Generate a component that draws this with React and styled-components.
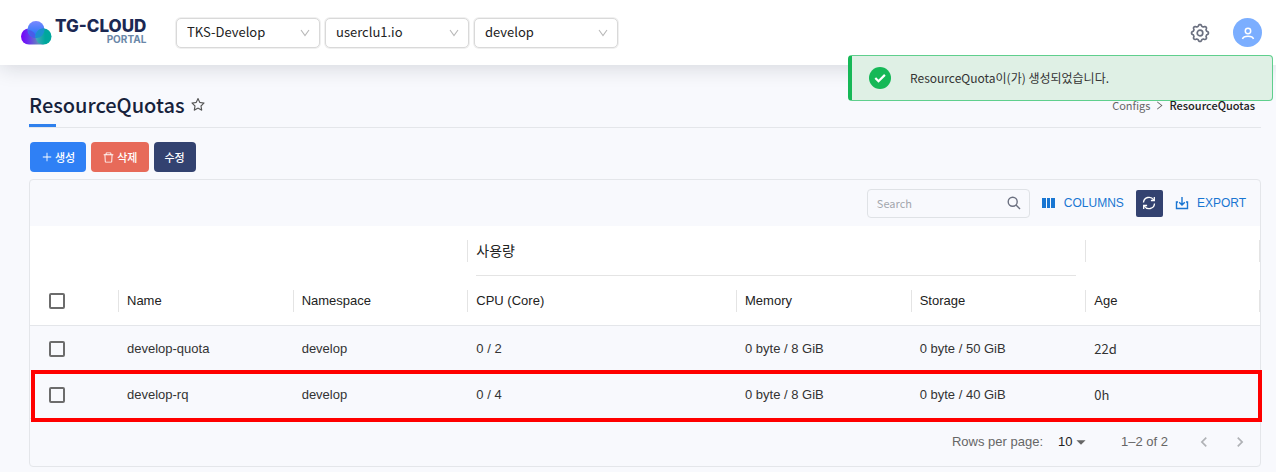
import React from 'react';
import styled, { createGlobalStyle } from 'styled-components';
import { AiOutlinePlus, AiOutlineDelete, AiOutlineStar, AiOutlineRight } from 'react-icons/ai';
import { MdChevronLeft, MdChevronRight, MdArrowDropDown } from 'react-icons/md';

const kr = '"Noto Sans CJK KR", sans-serif';
const sans = '"Liberation Sans", "Noto Sans CJK KR", sans-serif';
const line = '#e4e6ea';
const page = '#f8f9fd';
const navy = '#334270';

const GlobalStyle = createGlobalStyle`
  * { box-sizing: border-box; }
  body { margin: 0; background: ${page}; font-family: ${kr}; color: #222; }
  button, select, input { font: inherit; color: inherit; margin: 0; }
  button { cursor: pointer; }
  svg { display: block; flex: none; }
`;

const Header = styled.header`
  position: relative;
  display: flex;
  align-items: center;
  height: 65px;
  padding: 0 14px 0 20px;
  background: #fff;
  box-shadow: 0 2px 20px rgba(20, 24, 40, 0.16);
`;
const Brand = styled.a`
  display: flex;
  align-items: center;
  gap: 3px;
  width: 126px;
  margin-right: 30px;
  color: #1b2853;
  text-decoration: none;
`;
const BrandText = styled.span`
  display: flex;
  flex-direction: column;
  align-items: flex-end;
  padding-bottom: 2px;
  font-family: Inter, sans-serif;
  font-weight: 800;
  font-size: 17px;
  line-height: 15px;
  white-space: nowrap;
`;
const BrandSub = styled.small`
  font-weight: 700;
  font-size: 10px;
  line-height: 10px;
  color: #6a87a8;
`;
const Scopes = styled.nav`
  display: flex;
  gap: 5px;
  flex: 1;
`;
const SelectBox = styled.label`
  display: grid;
  align-items: center;
  width: 144px;
  height: 30px;
  color: #b8b8b8;
  > * { grid-area: 1 / 1; }
  > svg { justify-self: end; margin-right: 10px; pointer-events: none; }
`;
const Select = styled.select`
  appearance: none;
  width: 100%;
  height: 30px;
  padding: 0 28px 1px 10px;
  border: 1px solid #d9d9d9;
  border-radius: 5px;
  background: #fff;
  box-shadow: 0 0 0 1px #f0f0f0;
  font-size: 13px;
  line-height: 20px;
  color: #222;
`;
const IconButton = styled.button`
  display: grid;
  place-items: center;
  width: ${p => p.$size || 28}px;
  height: ${p => p.$size || 28}px;
  padding: 0;
  border: 0;
  border-radius: ${p => p.$radius || '50%'};
  background: ${p => p.$bg || 'transparent'};
  color: ${p => p.$color || '#6b7080'};
`;
const Account = styled.div`
  display: flex;
  align-items: center;
  gap: 19px;
`;
const Toast = styled.div`
  position: absolute;
  top: 55px;
  right: 3px;
  display: flex;
  align-items: center;
  gap: 19px;
  width: 425px;
  height: 46px;
  padding: 0 17px;
  border: 1px solid #5fcf8d;
  border-left: 4px solid #16b857;
  border-radius: 4px;
  background: #dff0e5;
  font-size: 12px;
  line-height: 20px;
  color: #333;
`;
const Main = styled.main`
  padding: 25px 15px 5px 29px;
`;
const TitleBar = styled.div`
  display: flex;
  justify-content: space-between;
  align-items: flex-start;
  height: 38px;
  padding-right: 6px;
  border-bottom: 1px solid ${line};
`;
const Title = styled.h1`
  display: flex;
  align-items: center;
  gap: 6px;
  height: 37px;
  margin: 0;
  padding-bottom: 7px;
  font-weight: 500;
  font-size: 20px;
  line-height: 30px;
  color: #17223b;
  background: linear-gradient(#2f80ed, #2f80ed) left bottom / 27px 3px no-repeat;
`;
const Crumbs = styled.nav`
  display: flex;
  align-items: center;
  gap: 4px;
  padding-top: 5px;
  font-size: 11px;
  line-height: 20px;
  color: #666;
  a { color: inherit; text-decoration: none; }
  strong { font-weight: 500; color: #222; }
`;
const Actions = styled.div`
  display: flex;
  gap: 5px;
  padding: 14px 0 7px 1px;
`;
const ActionButton = styled.button`
  display: flex;
  align-items: center;
  justify-content: center;
  gap: 2px;
  height: 30px;
  padding: 0 11px;
  border: 0;
  border-radius: 4px;
  background: ${p => p.$bg};
  color: #fff;
  font-size: 11px;
  line-height: 16px;
  font-weight: 500;
`;
const Panel = styled.section`
  border: 1px solid ${line};
  border-radius: 4px;
  font-family: ${sans};
  font-size: 13px;
  line-height: 20px;
`;
const Toolbar = styled.div`
  display: flex;
  align-items: center;
  justify-content: flex-end;
  height: 46px;
  padding-right: 14px;
`;
const SearchBox = styled.label`
  display: flex;
  align-items: center;
  width: 163px;
  height: 29px;
  margin-right: 12px;
  padding: 0 8px 0 9px;
  border: 1px solid #dfe2e6;
  border-radius: 4px;
  color: #6b7080;
`;
const SearchInput = styled.input`
  flex: 1;
  min-width: 0;
  padding: 0;
  border: 0;
  outline: 0;
  background: none;
  font-family: ${kr};
  font-size: 11px;
  &::placeholder { color: #a3a7ad; }
`;
const TextButton = styled.button`
  display: flex;
  align-items: center;
  gap: 8px;
  padding: 0;
  border: 0;
  background: none;
  font-size: 12px;
  color: #1976d2;
`;
const Refresh = styled(IconButton)`
  margin: 0 12px;
`;
const Grid = styled.table`
  width: 100%;
  table-layout: fixed;
  border-collapse: separate;
  border-spacing: 0;
  border-bottom: 1px solid ${line};
`;
const Col = styled.col`
  width: ${p => p.$w};
`;
const Th = styled.th`
  height: 50px;
  padding: 0 9px;
  background:
    ${p => p.$divider ? 'linear-gradient(#e4e4e4, #e4e4e4) left center / 1px 22px no-repeat,' : ''}
    ${p => p.$last ? 'linear-gradient(#e4e4e4, #e4e4e4) right center / 1px 22px no-repeat,' : ''}
    ${p => p.$group ? 'linear-gradient(#e4e4e4, #e4e4e4) 9px bottom / calc(100% - 18px) 1px no-repeat,' : ''}
    #fff;
  border-bottom: ${p => p.$base ? `1px solid ${line}` : '0'};
  text-align: left;
  font-weight: 400;
  font-size: ${p => p.$group ? 14 : 13}px;
  color: #222;
`;
const Td = styled.td`
  padding: 0 9px;
  font-family: ${p => p.$kr ? kr : 'inherit'};
  color: #333;
`;
const Row = styled.tr`
  position: relative;
  height: 46px;
  ${p => p.$marked && `
    > td:first-child::after {
      content: '';
      position: absolute;
      inset: -2px -2px -4px 1px;
      border: 4px solid #f00;
      pointer-events: none;
    }
  `}
`;
const Check = styled.input.attrs({ type: 'checkbox' })`
  appearance: none;
  display: block;
  width: 16px;
  height: 16px;
  margin: 0 0 0 10px;
  border: 2px solid #6c6c6c;
  border-radius: 2px;
`;
const Pager = styled.footer`
  display: flex;
  align-items: center;
  justify-content: flex-end;
  height: 47px;
  padding: 0 6px 2px 0;
  color: #666;
`;
const PageSize = styled.label`
  display: flex;
  align-items: center;
  gap: 15px;
  margin-right: 29px;
`;
const PageSizeBox = styled.span`
  display: grid;
  align-items: center;
  width: 34px;
  > * { grid-area: 1 / 1; }
  > svg { justify-self: end; pointer-events: none; }
`;
const PageSelect = styled.select`
  appearance: none;
  width: 100%;
  padding: 0;
  border: 0;
  background: none;
  color: #222;
`;
const PageButtons = styled.div`
  display: flex;
  gap: 8px;
  margin-left: 22px;
`;

const Logo = () => (
  <svg width="32" height="26" viewBox="0 -1 32 26" aria-hidden="true">
    <defs>
      <linearGradient id="left"><stop offset="0" stopColor="#7600f8" /><stop offset="0.3" stopColor="#6b2df0" /><stop offset="0.75" stopColor="#6486bd" /></linearGradient>
      <linearGradient id="top" x1="0" y1="0" x2="0" y2="1"><stop offset="0" stopColor="#7a88ff" /><stop offset="1" stopColor="#1474f5" /></linearGradient>
      <linearGradient id="right"><stop offset="0" stopColor="#4aa6bf" /><stop offset="0.6" stopColor="#00a79d" /></linearGradient>
    </defs>
    <path d="M9 7.500a8 8 0 0 0 0 16h14.500V15L9 7.500z" fill="url(#left)" />
    <circle cx="16" cy="8.500" r="8.500" fill="url(#top)" />
    <path d="M8 9a8 8 0 0 1 8 8 8.500 8.500 0 0 1-8-8z" fill="#4a5ce8" />
    <circle cx="23.500" cy="15.500" r="8" fill="url(#right)" />
    <path d="M24.500 7.600a8 8 0 0 0-9 9.400 8.500 8.500 0 0 0 9-9.400z" fill="#1d8fd0" />
  </svg>
);

const gearPath = Array.from({ length: 96 }, (_, i) => {
  const a = (i / 96) * Math.PI * 2;
  const r = 7.6 + Math.max(-0.8, Math.min(0.8, 1.2 * Math.cos(8 * a)));
  return `${i ? 'L' : 'M'}${(10 + r * Math.cos(a)).toFixed(2)} ${(10 + r * Math.sin(a)).toFixed(2)}`;
}).join('') + 'z';

const Gear = () => (
  <svg width="20" height="20" viewBox="0 0 20 20" fill="none" stroke="currentColor" strokeWidth="1.7" strokeLinejoin="round" aria-hidden="true">
    <path d={gearPath} />
    <circle cx="10" cy="10" r="2.8" />
  </svg>
);
const Person = () => (
  <svg width="14" height="14" viewBox="0 0 14 14" fill="none" stroke="currentColor" strokeWidth="1.500" aria-hidden="true">
    <circle cx="7" cy="5" r="2.700" />
    <path d="M1.500 13c.600-2 2.600-2.800 5.500-2.800s4.900.800 5.500 2.800" />
  </svg>
);
const Success = () => (
  <svg width="22" height="22" viewBox="0 0 22 22" aria-hidden="true">
    <circle cx="11" cy="11" r="11" fill="#16b857" />
    <path d="M6.300 11 9.500 14.200 15.900 7.900" fill="none" stroke="#fff" strokeWidth="2.200" />
  </svg>
);
const Sync = () => (
  <svg width="14" height="14" viewBox="0 0 14 14" fill="none" stroke="currentColor" strokeWidth="1.300" aria-hidden="true">
    <path d="M1.500 6.500A5.500 5.500 0 0 1 11.700 4M12.500 7.500A5.500 5.500 0 0 1 2.300 10" />
    <path d="M12.300 1v3.500H8.900M1.700 13V9.500h3.400" />
  </svg>
);
const Download = () => (
  <svg width="14" height="14" viewBox="0 0 14 14" fill="none" stroke="currentColor" strokeWidth="1.400" aria-hidden="true">
    <path d="M3 6H1.500v6.500h11V6H11M7 1v8M4.200 6.300 7 9.100l2.800-2.800" />
  </svg>
);
const Bars = () => (
  <svg width="14" height="10" viewBox="0 0 14 10" fill="currentColor" aria-hidden="true">
    <path d="M0 0h4v10H0zM5 0h3v10H5zM9 0h4v10H9z" />
  </svg>
);
const Magnifier = () => (
  <svg width="14" height="14" viewBox="0 0 14 14" fill="none" stroke="currentColor" strokeWidth="1.400" aria-hidden="true">
    <circle cx="5.700" cy="5.700" r="4.500" />
    <path d="m9 9 4 4" />
  </svg>
);
const Caret = () => (
  <svg width="10" height="8" viewBox="0 0 10 8" fill="none" stroke="currentColor" strokeWidth="1.100" aria-hidden="true">
    <path d="M1 1l4 5.500L9 1" />
  </svg>
);

const scopes = [['Cluster group', 'TKS-Develop'], ['Cluster', 'userclu1.io'], ['Namespace', 'develop']];
const rows = [
  { name: 'develop-quota', ns: 'develop', cpu: '0 / 2', memory: '0 byte / 8 GiB', storage: '0 byte / 50 GiB', age: '22d' },
  { name: 'develop-rq', ns: 'develop', cpu: '0 / 4', memory: '0 byte / 8 GiB', storage: '0 byte / 40 GiB', age: '0h', marked: true },
];
const columns = ['Name', 'Namespace', 'CPU (Core)', 'Memory', 'Storage', 'Age'];
const widths = ['88px', '14.2%', '14.2%', 'auto', '14.2%', '14.2%', '14.2%'];

export default function App() {
  return (
    <>
      <GlobalStyle />
      <Header>
        <Brand href="#home">
          <Logo />
          <BrandText>TG-CLOUD<BrandSub>PORTAL</BrandSub></BrandText>
        </Brand>
        <Scopes>
          {scopes.map(([label, value]) => (
            <SelectBox key={label}>
              <Select aria-label={label}><option>{value}</option></Select>
              <Caret />
            </SelectBox>
          ))}
        </Scopes>
        <Account>
          <IconButton aria-label="Settings"><Gear /></IconButton>
          <IconButton $size={29} $bg="#7baeff" $color="#fff" aria-label="Account"><Person /></IconButton>
        </Account>
      </Header>
      <Toast role="status"><Success />ResourceQuota이(가) 생성되었습니다.</Toast>
      <Main>
        <TitleBar>
          <Title>ResourceQuotas<AiOutlineStar size={16} color="#555" /></Title>
          <Crumbs aria-label="Breadcrumb">
            <a href="#configs">Configs</a><AiOutlineRight size={11} /><strong>ResourceQuotas</strong>
          </Crumbs>
        </TitleBar>
        <Actions>
          <ActionButton $bg="#2f80f5"><AiOutlinePlus size={12} />생성</ActionButton>
          <ActionButton $bg="#e76a59"><AiOutlineDelete size={13} />삭제</ActionButton>
          <ActionButton $bg={navy}>수정</ActionButton>
        </Actions>
        <Panel>
          <Toolbar>
            <SearchBox>
              <SearchInput placeholder="Search" aria-label="Search" />
              <Magnifier />
            </SearchBox>
            <TextButton><Bars />COLUMNS</TextButton>
            <Refresh $size={27} $radius="2px" $bg={navy} $color="#fff" aria-label="Refresh"><Sync /></Refresh>
            <TextButton><Download />EXPORT</TextButton>
          </Toolbar>
          <Grid>
            <colgroup>{widths.map((w, i) => <Col key={i} $w={w} />)}</colgroup>
            <thead>
              <tr>
                <Th colSpan={3} />
                <Th colSpan={3} $divider $group scope="colgroup">사용량</Th>
                <Th $divider $last />
              </tr>
              <tr>
                <Th $base><Check aria-label="Select all rows" /></Th>
                {columns.map(c => <Th key={c} $base $divider $last={c === 'Age'} scope="col">{c}</Th>)}
              </tr>
            </thead>
            <tbody>
              {rows.map(r => (
                <Row key={r.name} $marked={r.marked}>
                  <Td><Check aria-label={`Select ${r.name}`} /></Td>
                  <Td>{r.name}</Td>
                  <Td>{r.ns}</Td>
                  <Td>{r.cpu}</Td>
                  <Td>{r.memory}</Td>
                  <Td>{r.storage}</Td>
                  <Td $kr>{r.age}</Td>
                </Row>
              ))}
            </tbody>
          </Grid>
          <Pager>
            <PageSize>
              Rows per page:
              <PageSizeBox>
                <PageSelect><option>10</option></PageSelect>
                <MdArrowDropDown size={22} />
              </PageSizeBox>
            </PageSize>
            1–2 of 2
            <PageButtons>
              <IconButton aria-label="Previous page" $color="#b0b2b6"><MdChevronLeft size={20} /></IconButton>
              <IconButton aria-label="Next page" $color="#b0b2b6"><MdChevronRight size={20} /></IconButton>
            </PageButtons>
          </Pager>
        </Panel>
      </Main>
    </>
  );
}
